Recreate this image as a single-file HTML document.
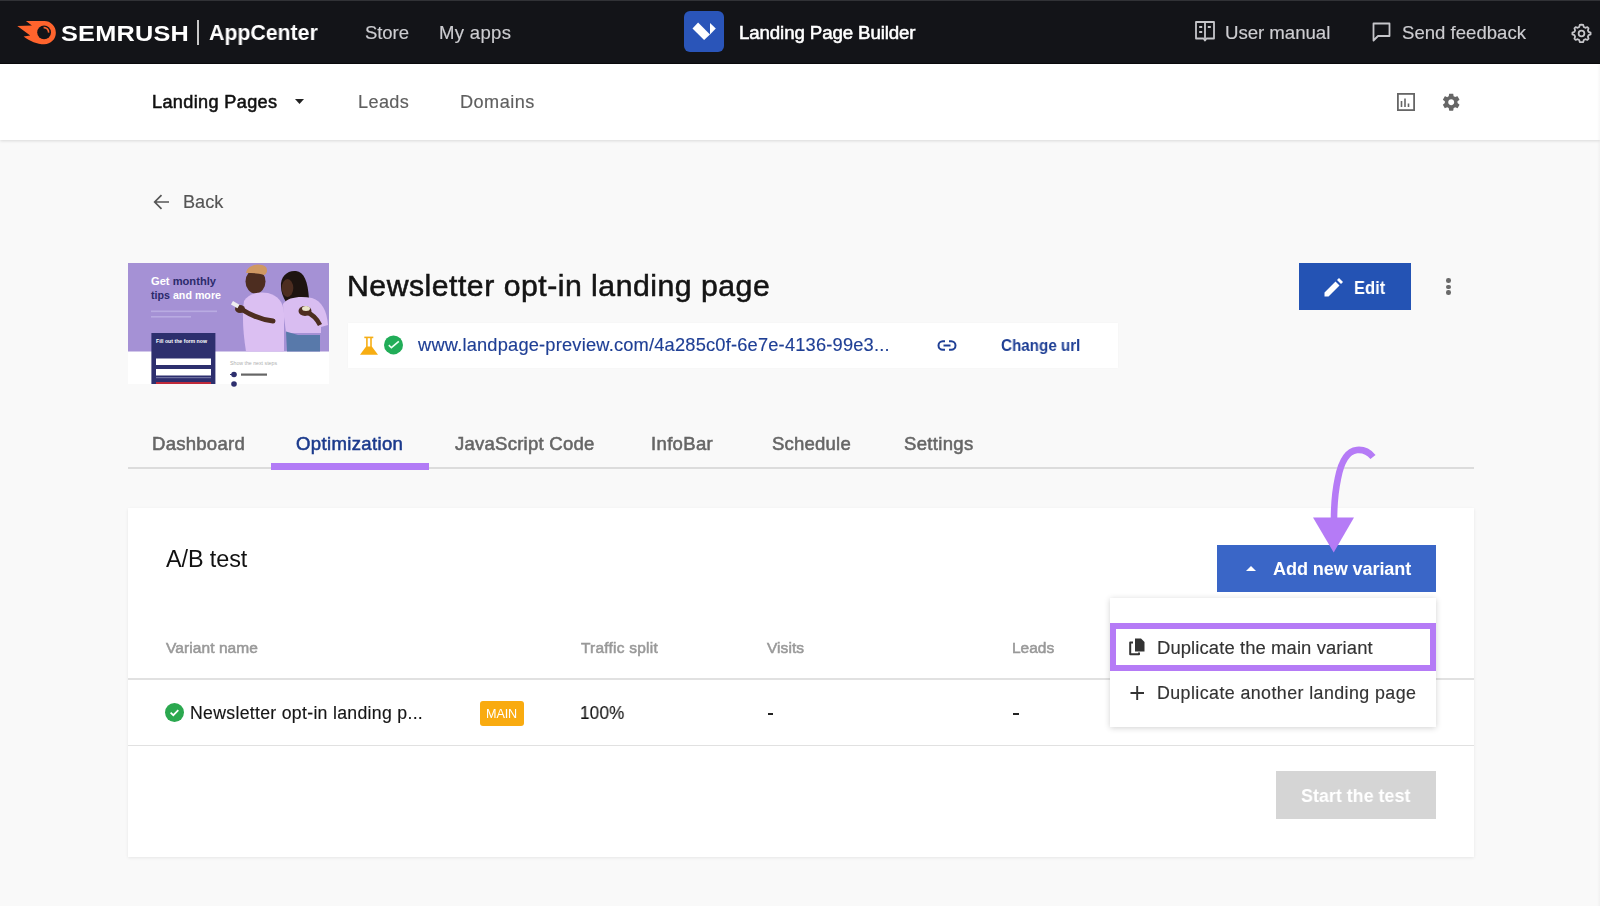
<!DOCTYPE html>
<html><head><meta charset="utf-8"><style>
html,body{margin:0;padding:0}
body{width:1600px;height:906px;overflow:hidden;background:#f9f9f9;position:relative;font-family:"Liberation Sans",sans-serif}
.a{position:absolute}
.t{position:absolute;white-space:nowrap;will-change:transform;font-family:"Liberation Sans",sans-serif}
svg{position:absolute;overflow:visible}
</style></head><body>
<!-- top bar -->
<div class="a" style="left:0;top:0;width:1600px;height:64px;background:#131418"></div>
<div class="a" style="left:0;top:0;width:1600px;height:1px;background:#313236"></div>
<div class="a" style="left:0;top:63px;width:1600px;height:1px;background:#0a0a0c"></div>
<!-- semrush flame -->
<svg style="left:0;top:0" width="60" height="64" viewBox="0 0 60 64">
  <path d="M25.9 21.1 H44.3 A11.55 11.55 0 0 1 44.3 44.2 C37 44.2 30 41 23.6 36.4 L30.2 35.4 L17.3 26 L31.9 25.5 Z" fill="#ff642d"/>
  <circle cx="44.1" cy="32.4" r="6.9" fill="#131418"/>
  <path d="M43.6 27.6 A4.6 4.6 0 0 1 48.6 32.6" stroke="#ff642d" stroke-width="1.6" fill="none"/>
</svg>
<div class="a" style="left:197px;top:20px;width:1.5px;height:25px;background:#c8c8c8"></div>
<!-- app icon -->
<div class="a" style="left:684px;top:11px;width:40px;height:41px;border-radius:6px;background:#2a55b9"></div>
<svg style="left:684px;top:11px" width="40" height="41" viewBox="0 0 40 41">
  <path d="M8.5 17.6 L14.1 11.6 L26 23.6 L20.1 28.9 Z" fill="#fff"/>
  <path d="M26 12 L31.8 17.6 L26 23.6 Z" fill="#fff"/>
</svg>
<!-- book icon -->
<svg style="left:1195px;top:21px" width="20" height="21" viewBox="0 0 20 21">
  <path d="M1 1 H19 V17.5 H11.5 L10 19.5 L8.5 17.5 H1 Z M10 1 V17.5" stroke="#c6c6ca" stroke-width="1.8" fill="none" stroke-linejoin="round"/>
  <path d="M4.2 6 H7.2 M4.2 11 H7.2 M12.8 6 H15.8" stroke="#c6c6ca" stroke-width="1.8"/>
</svg>
<!-- chat icon -->
<svg style="left:1372px;top:22px" width="20" height="20" viewBox="0 0 20 20">
  <path d="M1.5 1.5 H17.5 V14 H6 L1.5 18.5 Z" stroke="#c6c6ca" stroke-width="1.8" fill="none" stroke-linejoin="round"/>
</svg>
<!-- gear top -->
<svg style="left:1571px;top:22.5px" width="21" height="21" viewBox="0 0 24 24">
  <path d="M12 1.8 L14 2.2 L14.6 4.6 L16.4 5.5 L18.7 4.6 L20.1 6.1 L19.3 8.4 L20.1 10.2 L22.4 11 L22.4 13 L20.1 13.8 L19.3 15.6 L20.1 17.9 L18.7 19.4 L16.4 18.5 L14.6 19.4 L14 21.8 L10 21.8 L9.4 19.4 L7.6 18.5 L5.3 19.4 L3.9 17.9 L4.7 15.6 L3.9 13.8 L1.6 13 L1.6 11 L3.9 10.2 L4.7 8.4 L3.9 6.1 L5.3 4.6 L7.6 5.5 L9.4 4.6 L10 2.2 Z" stroke="#c6c6ca" stroke-width="2" fill="none" stroke-linejoin="round"/>
  <circle cx="12" cy="12" r="3.3" stroke="#c6c6ca" stroke-width="2" fill="none"/>
</svg>

<!-- subnav -->
<div class="a" style="left:0;top:64px;width:1600px;height:76px;background:#fff;box-shadow:0 1px 3px rgba(0,0,0,0.13)"></div>
<svg style="left:295px;top:99px" width="9" height="5" viewBox="0 0 9 5"><path d="M0 0 H9 L4.5 5 Z" fill="#222"/></svg>
<svg style="left:1396.5px;top:93px" width="18" height="18" viewBox="0 0 18 18">
  <rect x="0.9" y="0.9" width="16.2" height="16.2" stroke="#666" stroke-width="1.8" fill="none"/>
  <path d="M4.5 8 V14 M8 5.5 V14 M11.5 10.5 V14" stroke="#666" stroke-width="1.6"/>
</svg>
<svg style="left:1440.8px;top:92px" width="20.4" height="20.4" viewBox="0 0 24 24">
  <path d="M19.4 13c.04-.33.06-.66.06-1s-.02-.67-.06-1l2.1-1.65c.2-.15.25-.42.12-.64l-2-3.46c-.12-.22-.39-.3-.61-.22l-2.49 1c-.52-.4-1.08-.73-1.69-.98l-.38-2.65C14.46 2.18 14.25 2 14 2h-4c-.25 0-.46.18-.49.42l-.38 2.65c-.61.25-1.17.59-1.69.98l-2.49-1c-.23-.09-.49 0-.61.22l-2 3.46c-.13.22-.07.49.12.64L4.56 11c-.04.33-.06.67-.06 1s.02.67.06 1l-2.1 1.65c-.2.15-.25.42-.12.64l2 3.46c.12.22.39.3.61.22l2.49-1c.52.4 1.08.73 1.69.98l.38 2.65c.03.24.24.42.49.42h4c.25 0 .46-.18.49-.42l.38-2.65c.61-.25 1.17-.59 1.69-.98l2.49 1c.23.09.49 0 .61-.22l2-3.46c.12-.22.07-.49-.12-.64L19.4 13zM12 15.5c-1.93 0-3.5-1.57-3.5-3.5s1.57-3.5 3.5-3.5 3.5 1.57 3.5 3.5-1.57 3.5-3.5 3.5z" fill="#666"/>
</svg>

<!-- back arrow -->
<svg style="left:153px;top:194px" width="17" height="16" viewBox="0 0 17 16">
  <path d="M16 8 H2 M8.5 1.2 L1.7 8 L8.5 14.8" stroke="#555" stroke-width="1.7" fill="none"/>
</svg>

<!-- thumbnail -->
<svg style="left:127.5px;top:262.5px" width="201" height="121" viewBox="0 0 201 121">
  <rect x="0" y="0" width="201" height="121" fill="#fff"/>
  <rect x="0" y="0" width="201" height="88.5" fill="#a591d5"/>
  <text x="23" y="21.5" font-family="Liberation Sans" font-weight="bold" font-size="10.5" textLength="65" lengthAdjust="spacingAndGlyphs" fill="#fff">Get <tspan fill="#2b2a6b">monthly</tspan></text>
  <text x="23" y="35.5" font-family="Liberation Sans" font-weight="bold" font-size="10.5" textLength="70" lengthAdjust="spacingAndGlyphs" fill="#2b2a6b">tips <tspan fill="#fff">and more</tspan></text>
  <rect x="23" y="47.5" width="66" height="1.6" fill="#b9abe2"/>
  <rect x="23" y="53" width="40" height="1.6" fill="#b9abe2"/>
  <!-- woman (behind) -->
  <path d="M153 24 C152 13 160 7 168 8 C176 9 180 18 181 36 L158 39 C155 34 153 29 153 24 Z" fill="#1e1410"/>
  <ellipse cx="159.5" cy="25" rx="5.8" ry="9" fill="#4d2d20"/>
  <path d="M155 41 C160 34 172 33 184 35 C194 38 199 48 200 62 L193 64 L193 70 L158 70 C157 60 155 50 155 41 Z" fill="#d9bdf1"/>
  <path d="M170 72 H192 V88.5 H159 L158 68.5 Z" fill="#5879aa"/>
  <path d="M192 62 C189 56 184 51 178 49" stroke="#4d2d20" stroke-width="4.5" fill="none"/>
  <ellipse cx="177" cy="48" rx="6.5" ry="5" fill="#4d2d20"/>
  <ellipse cx="178" cy="45.5" rx="4" ry="2.5" fill="#e9e3c8"/>
  <!-- man -->
  <ellipse cx="127.5" cy="18.5" rx="10" ry="12" fill="#4d2d20"/>
  <path d="M118 10 C119 2 131 -1 138 4 C140 7 139 11 136 12 C130 10 124 10 118 10 Z" fill="#cf9863"/>
  <path d="M116 38 C120 31 130 28 140 30 C150 33 155 38 156 50 L156 88.5 L118 88.5 C115 70 114 52 116 38 Z" fill="#dbbff2"/>
  <path d="M145 58 C136 57 124 53 113 46" stroke="#4d2d20" stroke-width="5" fill="none" stroke-linecap="round"/>
  <ellipse cx="112" cy="46" rx="5" ry="4" fill="#4d2d20"/>
  <rect x="103.5" y="39.5" width="7.5" height="4" fill="#eeeeee" transform="rotate(30 107 41.5)"/>
  <!-- form box -->
  <rect x="23.4" y="70" width="64" height="51" fill="#2d2f6e"/>
  <text x="28" y="80" font-family="Liberation Sans" font-weight="bold" font-size="5" textLength="51" lengthAdjust="spacingAndGlyphs" fill="#fff">Fill out the form now</text>
  <rect x="28" y="95.5" width="55" height="6.5" fill="#fff"/>
  <rect x="28" y="106" width="55" height="6.5" fill="#fff"/>
  <rect x="28" y="114" width="55" height="1.2" fill="#6d6f9e"/>
  <rect x="28" y="119" width="55" height="2" fill="#c02a3a"/>
  <text x="102" y="101.5" font-family="Liberation Sans" font-size="4.5" textLength="47" lengthAdjust="spacingAndGlyphs" fill="#b0b0b0">Show the next steps</text>
  <circle cx="106" cy="111.5" r="2.8" fill="#2d2f6e"/>
  <rect x="102" y="111" width="2" height="1" fill="#2d2f6e"/>
  <rect x="113" y="110.5" width="26" height="2.2" fill="#666"/>
  <circle cx="106" cy="121" r="2.8" fill="#2d2f6e"/>
</svg>

<!-- url box -->
<div class="a" style="left:347.5px;top:323px;width:770.5px;height:45px;background:#fff;box-shadow:0 0 2px rgba(0,0,0,0.03)"></div>
<svg style="left:355px;top:330px" width="55" height="30" viewBox="0 0 55 30">
  <rect x="9.3" y="6.6" width="9" height="1.6" fill="#f5ae17"/>
  <rect x="11.1" y="7.5" width="1.6" height="10" fill="#f5ae17"/>
  <rect x="15.2" y="7.5" width="1.6" height="10" fill="#f5ae17"/>
  <path d="M11.1 16.5 H16.8 L23 24.8 H5 Z" fill="#f7ad12"/>
  <circle cx="38.5" cy="14.9" r="9.5" fill="#21ad58"/>
  <path d="M33.8 15.1 L36.4 17.7 L43.8 11.3" stroke="#eafff2" stroke-width="1.6" fill="none"/>
</svg>
<svg style="left:938px;top:340px" width="18" height="11" viewBox="0 0 18 11">
  <path d="M7 1.2 H4.8 A4.3 4.3 0 0 0 4.8 9.8 H7 M11 1.2 H13.2 A4.3 4.3 0 0 1 13.2 9.8 H11 M5.5 5.5 H12.5" stroke="#1f3f95" stroke-width="2" fill="none"/>
</svg>

<!-- edit button -->
<div class="a" style="left:1299px;top:263px;width:112px;height:47px;background:#2453b4"></div>
<svg style="left:1323.5px;top:277.5px" width="19" height="19" viewBox="0 0 19 19">
  <path d="M0.5 14.5 L11.5 3.5 L15.5 7.5 L4.5 18.5 H0.5 Z M13 2 L15 0 L19 4 L17 6 Z" fill="#fff"/>
</svg>
<div class="a" style="left:1446.2px;top:278.3px;width:4.6px;height:4.6px;border-radius:50%;background:#6a6a6a"></div>
<div class="a" style="left:1446.2px;top:284.5px;width:4.6px;height:4.6px;border-radius:50%;background:#6a6a6a"></div>
<div class="a" style="left:1446.2px;top:290.4px;width:4.6px;height:4.6px;border-radius:50%;background:#6a6a6a"></div>

<!-- tabs -->
<div class="a" style="left:128px;top:467px;width:1346px;height:2px;background:#dcdcdc"></div>
<div class="a" style="left:270.5px;top:463px;width:158.5px;height:6.5px;background:#b27bf6"></div>

<!-- card -->
<div class="a" style="left:127.5px;top:507.5px;width:1346.5px;height:349px;background:#fff;box-shadow:0 1px 3px rgba(0,0,0,0.08)"></div>
<div class="a" style="left:127.5px;top:678px;width:1346.5px;height:1.5px;background:#e1e1e1"></div>
<div class="a" style="left:127.5px;top:744.5px;width:1346.5px;height:1.5px;background:#e1e1e1"></div>

<!-- add new variant -->
<div class="a" style="left:1217px;top:545px;width:219px;height:47px;background:#3a66c7"></div>
<svg style="left:1246px;top:566px" width="10" height="5" viewBox="0 0 10 5"><path d="M0 5 L5 0 L10 5 Z" fill="#fff"/></svg>

<!-- row -->
<svg style="left:165px;top:703px" width="19" height="19" viewBox="0 0 19 19">
  <circle cx="9.5" cy="9.5" r="9.5" fill="#2ba84f"/>
  <path d="M5.6 9.6 L8.3 12.2 L13.3 7.1" stroke="#fff" stroke-width="1.7" fill="none"/>
</svg>
<div class="a" style="left:480px;top:701px;width:44px;height:25px;border-radius:3px;background:#f9ab10"></div>
<div class="a" style="left:767.7px;top:712.5px;width:5.8px;height:2px;background:#222"></div>
<div class="a" style="left:1013px;top:712.5px;width:6px;height:2px;background:#222"></div>

<!-- start test -->
<div class="a" style="left:1276px;top:771px;width:160px;height:48px;background:#d5d5d5"></div>

<!-- dropdown -->
<div class="a" style="left:1110px;top:597.5px;width:326px;height:129.5px;background:#fff;box-shadow:0 1px 6px rgba(0,0,0,0.18)"></div>
<div class="a" style="left:1110px;top:622.5px;width:314px;height:36.5px;border:6px solid #b57bf6"></div>
<svg style="left:1129px;top:638px" width="16" height="18" viewBox="0 0 16 18">
  <path d="M6 0.5 H12 L15.5 4 V13.5 H6 Z" fill="#333"/>
  <path d="M4 4.5 H1.2 V16.3 H10 V14.5" stroke="#333" stroke-width="2" fill="none" stroke-linejoin="round"/>
</svg>
<svg style="left:1129.5px;top:685.5px" width="15" height="14" viewBox="0 0 15 14">
  <path d="M0.5 7 H14 M7.2 0 V14" stroke="#333" stroke-width="1.9"/>
</svg>

<!-- arrow -->
<svg style="left:0;top:0" width="1600" height="906" viewBox="0 0 1600 906">
  <path d="M1373 457 C1368 451 1362 449.5 1357 450 C1347 451 1341 463 1338 478 C1335 492 1334 505 1334 520" stroke="#b57bf6" stroke-width="6.6" fill="none"/>
  <path d="M1313 517.4 H1354 L1333.7 552.5 Z" fill="#b57bf6"/>
</svg>

<div class="a" style="left:1597px;top:64px;width:3px;height:842px;background:linear-gradient(90deg,rgba(0,0,0,0),rgba(0,0,0,0.03))"></div>
<div class="t" id="semrush" style="left:61.00px;top:22.71px;font-size:22.32px;line-height:22.32px;font-weight:700;color:#fff;letter-spacing:0.200px;transform:scaleX(1.1329);transform-origin:0 0;">SEMRUSH</div>
<div class="t" id="appcenter" style="left:209.30px;top:22.00px;font-size:21.74px;line-height:21.74px;font-weight:700;color:#fff;letter-spacing:0.000px;transform:scaleX(0.9791);transform-origin:0 0;">AppCenter</div>
<div class="t" id="store" style="left:365.00px;top:23.70px;font-size:18.55px;line-height:18.55px;font-weight:400;color:#cdcdd1;letter-spacing:-0.072px;-webkit-text-stroke:0.15px currentColor;">Store</div>
<div class="t" id="myapps" style="left:438.60px;top:23.70px;font-size:18.55px;line-height:18.55px;font-weight:400;color:#cdcdd1;letter-spacing:0.322px;-webkit-text-stroke:0.15px currentColor;">My apps</div>
<div class="t" id="lpb" style="left:739.25px;top:23.67px;font-size:18.7px;line-height:18.7px;font-weight:400;color:#fff;letter-spacing:-0.112px;-webkit-text-stroke:0.55px currentColor;">Landing Page Builder</div>
<div class="t" id="um" style="left:1225.25px;top:23.67px;font-size:18.7px;line-height:18.7px;font-weight:400;color:#cdcdd1;letter-spacing:-0.064px;-webkit-text-stroke:0.15px currentColor;">User manual</div>
<div class="t" id="sf" style="left:1402.00px;top:23.90px;font-size:18.55px;line-height:18.55px;font-weight:400;color:#cdcdd1;letter-spacing:0.027px;-webkit-text-stroke:0.15px currentColor;">Send feedback</div>
<div class="t" id="lp" style="left:152.00px;top:93.01px;font-size:18.12px;line-height:18.12px;font-weight:400;color:#111;letter-spacing:0.352px;-webkit-text-stroke:0.55px currentColor;">Landing Pages</div>
<div class="t" id="leads" style="left:358.00px;top:93.16px;font-size:18.12px;line-height:18.12px;font-weight:400;color:#5f5f5f;letter-spacing:0.378px;-webkit-text-stroke:0.15px currentColor;">Leads</div>
<div class="t" id="domains" style="left:459.80px;top:93.16px;font-size:18.12px;line-height:18.12px;font-weight:400;color:#5f5f5f;letter-spacing:0.466px;-webkit-text-stroke:0.15px currentColor;">Domains</div>
<div class="t" id="back" style="left:182.75px;top:192.76px;font-size:18.12px;line-height:18.12px;font-weight:400;color:#555;letter-spacing:0.015px;-webkit-text-stroke:0.15px currentColor;">Back</div>
<div class="t" id="title" style="left:347.00px;top:270.77px;font-size:30.22px;line-height:30.22px;font-weight:400;color:#141414;letter-spacing:0.500px;-webkit-text-stroke:0.55px currentColor;">Newsletter opt-in landing page</div>
<div class="t" id="url" style="left:417.50px;top:336.14px;font-size:18.26px;line-height:18.26px;font-weight:400;color:#1f3f95;letter-spacing:0.199px;-webkit-text-stroke:0.15px currentColor;">www.landpage-preview.com/4a285c0f-6e7e-4136-99e3...</div>
<div class="t" id="chg" style="left:1001.00px;top:337.53px;font-size:15.8px;line-height:15.8px;font-weight:700;color:#1f3f95;letter-spacing:0.000px;transform:scaleX(0.9621);transform-origin:0 0;">Change url</div>
<div class="t" id="edit" style="left:1354.13px;top:277.72px;font-size:18.99px;line-height:18.99px;font-weight:700;color:#fff;letter-spacing:0.100px;transform:scaleX(0.8651);transform-origin:0 0;">Edit</div>
<div class="t" id="t1" style="left:152.00px;top:435.30px;font-size:18.55px;line-height:18.55px;font-weight:400;color:#666;letter-spacing:0.256px;-webkit-text-stroke:0.55px currentColor;">Dashboard</div>
<div class="t" id="t2" style="left:296.40px;top:435.30px;font-size:18.55px;line-height:18.55px;font-weight:400;color:#1b3a8c;letter-spacing:0.356px;-webkit-text-stroke:0.55px currentColor;">Optimization</div>
<div class="t" id="t3" style="left:455.00px;top:435.30px;font-size:18.55px;line-height:18.55px;font-weight:400;color:#666;letter-spacing:0.239px;-webkit-text-stroke:0.55px currentColor;">JavaScript Code</div>
<div class="t" id="t4" style="left:651.40px;top:435.30px;font-size:18.55px;line-height:18.55px;font-weight:400;color:#666;letter-spacing:0.337px;-webkit-text-stroke:0.55px currentColor;">InfoBar</div>
<div class="t" id="t5" style="left:771.60px;top:435.30px;font-size:18.55px;line-height:18.55px;font-weight:400;color:#666;letter-spacing:0.205px;-webkit-text-stroke:0.55px currentColor;">Schedule</div>
<div class="t" id="t6" style="left:904.00px;top:435.30px;font-size:18.55px;line-height:18.55px;font-weight:400;color:#666;letter-spacing:0.330px;-webkit-text-stroke:0.55px currentColor;">Settings</div>
<div class="t" id="ab" style="left:165.75px;top:548.18px;font-size:23.41px;line-height:23.41px;font-weight:400;color:#111;letter-spacing:-0.100px;">A/B test</div>
<div class="t" id="anv" style="left:1272.50px;top:560.26px;font-size:18.12px;line-height:18.12px;font-weight:700;color:#fff;letter-spacing:-0.114px;">Add new variant</div>
<div class="t" id="h1" style="left:166.00px;top:640.07px;font-size:15.51px;line-height:15.51px;font-weight:400;color:#999;letter-spacing:0.080px;-webkit-text-stroke:0.55px currentColor;">Variant name</div>
<div class="t" id="h2" style="left:581.00px;top:640.07px;font-size:15.51px;line-height:15.51px;font-weight:400;color:#999;letter-spacing:0.220px;-webkit-text-stroke:0.55px currentColor;">Traffic split</div>
<div class="t" id="h3" style="left:767.40px;top:640.07px;font-size:15.51px;line-height:15.51px;font-weight:400;color:#999;letter-spacing:0.060px;-webkit-text-stroke:0.55px currentColor;">Visits</div>
<div class="t" id="h4" style="left:1011.60px;top:640.07px;font-size:15.51px;line-height:15.51px;font-weight:400;color:#999;letter-spacing:-0.020px;-webkit-text-stroke:0.55px currentColor;">Leads</div>
<div class="t" id="r1" style="left:190.15px;top:705.13px;font-size:17.68px;line-height:17.68px;font-weight:400;color:#151515;letter-spacing:0.303px;-webkit-text-stroke:0.15px currentColor;">Newsletter opt-in landing p...</div>
<div class="t" id="main" style="left:485.60px;top:707.53px;font-size:12.61px;line-height:12.61px;font-weight:400;color:#fff;letter-spacing:-0.106px;">MAIN</div>
<div class="t" id="pct" style="left:580.08px;top:704.20px;font-size:18.55px;line-height:18.55px;font-weight:400;color:#151515;letter-spacing:0.300px;transform:scaleX(0.9184);transform-origin:0 0;-webkit-text-stroke:0.15px currentColor;">100%</div>
<div class="t" id="dd1" style="left:1157.00px;top:638.52px;font-size:18.41px;line-height:18.41px;font-weight:400;color:#333;letter-spacing:0.112px;-webkit-text-stroke:0.15px currentColor;">Duplicate the main variant</div>
<div class="t" id="dd2" style="left:1157.00px;top:684.91px;font-size:17.83px;line-height:17.83px;font-weight:400;color:#333;letter-spacing:0.417px;-webkit-text-stroke:0.15px currentColor;">Duplicate another landing page</div>
<div class="t" id="st" style="left:1300.80px;top:786.22px;font-size:18.99px;line-height:18.99px;font-weight:700;color:#fff;letter-spacing:0.000px;transform:scaleX(0.9425);transform-origin:0 0;">Start the test</div>
</body></html>
